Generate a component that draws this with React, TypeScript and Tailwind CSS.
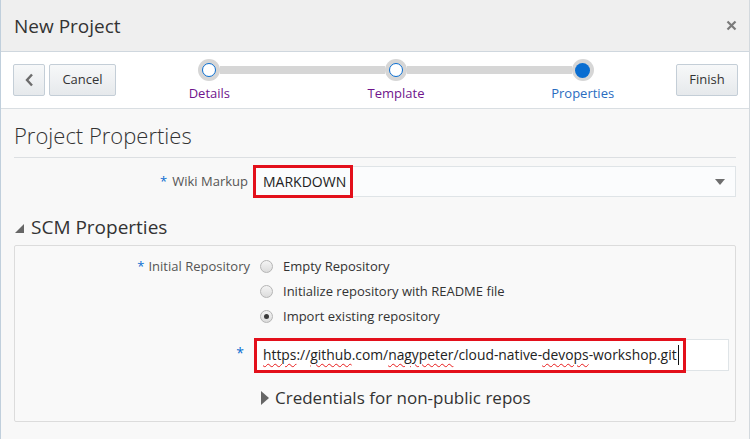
import React from 'react';

const steps = [
  { label: 'Details', done: true },
  { label: 'Template', done: true },
  { label: 'Properties', done: false },
];

const radios = [
  { label: 'Empty Repository', checked: false },
  { label: 'Initialize repository with README file', checked: false },
  { label: 'Import existing repository', checked: true },
];

const Radio = ({ checked }: { checked: boolean }) => (
  <span className="flex h-[13px] w-[13px] items-center justify-center rounded-full border border-[#b5b5b5] bg-gradient-to-b from-[#f4f4f4] to-[#dcdcdc]">
    {checked && <span className="h-[5px] w-[5px] rounded-full bg-[#3a3a3a]" />}
  </span>
);

const Step = ({ label, done, index }: { label: string; done: boolean; index: number }) => (
  <div className="flex flex-1 flex-col items-center">
    <div className="flex w-full items-center">
      <div className={`h-[8px] flex-1 ${index === 0 ? '' : 'bg-[#d6d6d6]'}`} />
      <div className="flex h-[22px] w-[22px] items-center justify-center rounded-full bg-[#d6d6d6]">
        {done ? (
          <div className="h-[14px] w-[14px] rounded-full border-[1.5px] border-[#0a6ed1] bg-white" />
        ) : (
          <div className="h-[15px] w-[15px] rounded-full bg-[#0a6ed1]" />
        )}
      </div>
      <div className={`h-[8px] flex-1 ${index === 2 ? '' : 'bg-[#d6d6d6]'}`} />
    </div>
    <span className={`mt-[3px] text-[13px] leading-[18px] ${done ? 'text-[#70148c]' : 'text-[#2a6cbf]'}`}>{label}</span>
  </div>
);

const ToolButton = ({ children, className = '' }: { children: React.ReactNode; className?: string }) => (
  <button className={`flex h-[32px] items-center justify-center rounded-[2px] border border-[#c4ced7] bg-gradient-to-b from-[#f7f8f9] to-[#e6e9ec] text-[13px] text-[#333] ${className}`}>
    {children}
  </button>
);

// spellcheck squiggle under the words the browser flags
const Wavy = ({ children }: { children: React.ReactNode }) => (
  <span className="underline decoration-wavy decoration-[#e81b1b] decoration-[1px] underline-offset-[3px]">{children}</span>
);

export default function App() {
  return (
    <div
      className="h-[439px] w-[750px] overflow-hidden border-l border-r border-l-[#c0cfdc] border-r-[#d3d9de] bg-[#f8f8f8] text-[#333]"
      style={{ fontFamily: '"Open Sans", "Noto Sans", sans-serif' }}
    >
      {/* Header */}
      <div className="flex h-[52px] items-center justify-between border-b border-[#cfd7de] bg-[#efefef] pl-[13px] pr-[12px]">
        <h1 className="text-[19px] leading-[26px] text-[#333]">New Project</h1>
        <svg width="11" height="11" viewBox="0 0 11 11">
          <path d="M1.5 1.5 L9.5 9.5 M9.5 1.5 L1.5 9.5" stroke="#7a7a7a" strokeWidth="2.2" />
        </svg>
      </div>

      {/* Train toolbar */}
      <div className="flex h-[57px] border-b border-[#d9dee2] bg-white pl-[12px] pr-[11px]">
        <div className="flex items-center gap-[4px]">
          <ToolButton className="w-[32px]">
            <svg width="9" height="14" viewBox="0 0 9 14">
              <path d="M7 1.5 L2 7 L7 12.5" stroke="#6c6c6c" strokeWidth="2.4" fill="none" />
            </svg>
          </ToolButton>
          <ToolButton className="w-[67px]">Cancel</ToolButton>
        </div>
        <div className="flex flex-1 pt-[7px]">
          {steps.map((s, i) => (
            <Step key={s.label} label={s.label} done={s.done} index={i} />
          ))}
        </div>
        <div className="flex items-center">
          <ToolButton className="w-[62px]">Finish</ToolButton>
        </div>
      </div>

      {/* Body */}
      <div className="pl-[13px] pr-[13px]">
        <div className="border-b border-[#dcdfe2] pb-[10px] pt-[14px]">
          <h2 className="text-[22px] font-light leading-[24px] text-[#333]">Project Properties</h2>
        </div>

        <div className="mt-[8px] flex h-[31px] items-center">
          <label className="w-[239px] pr-[5px] text-right text-[13px] text-[#555]">
            <span className="mr-[5px] text-[#0a6ed1]">*</span>Wiki Markup
          </label>
          <div className="relative flex h-[31px] flex-1 items-center justify-between border border-[#dfe4e7] bg-[#fbfcfd] pl-[9px] pr-[10px]">
            <span className="text-[14px] text-[#222]">MARKDOWN</span>
            <svg width="10" height="6" viewBox="0 0 10 6">
              <path d="M0 0 L10 0 L5 6 Z" fill="#6e6e6e" />
            </svg>
            <div className="absolute -left-px -top-[2px] h-[33px] w-[100px] border-[3px] border-[#e3101b]" />
          </div>
        </div>

        <div className="mt-[18px] flex h-[24px] items-center">
          <svg width="9" height="9" viewBox="0 0 9 9" className="ml-[1px] mt-[3px]">
            <path d="M9 0 L9 9 L0 9 Z" fill="#666" />
          </svg>
          <h3 className="ml-[7px] text-[19px] leading-[24px] text-[#333]">SCM Properties</h3>
        </div>

        <div className="mt-[6px] h-[177px] rounded-[2px] border border-[#dcdcdc] bg-[#f9f9f9] pt-[8px]">
          <div className="flex">
            <label className="w-[238px] pr-[3px] text-right text-[13px] leading-[25px] text-[#555]">
              <span className="mr-[4px] text-[#0a6ed1]">*</span>Initial Repository
            </label>
            <div className="flex flex-col">
              {radios.map(r => (
                <div key={r.label} className="flex h-[25px] items-center pl-[7px]">
                  <Radio checked={r.checked} />
                  <span className="ml-[10px] text-[13px] text-[#333]">{r.label}</span>
                </div>
              ))}
            </div>
          </div>

          <div className="mt-[10px] flex">
            <label className="w-[238px] pr-[9px] pt-[3px] text-right text-[14px] text-[#0a6ed1]">*</label>
            <div className="relative ml-[2px] mr-[6px] flex h-[32px] flex-1 items-center border border-[#dfe4e7] bg-white pl-[7px]">
              <span className="whitespace-nowrap text-[13.85px] text-[#222]">
                <Wavy>https</Wavy>://<Wavy>github</Wavy>.com/<Wavy>nagypeter</Wavy>/cloud-native-<Wavy>devops</Wavy>-workshop.git
              </span>
              <span className="ml-[1px] h-[20px] w-px bg-[#111]" />
              <div className="absolute -left-[2px] -top-[2px] h-[35px] w-[432px] border-[3px] border-[#e3101b]" />
            </div>
          </div>

          <div className="mt-[15px] flex h-[24px] items-center pl-[246px]">
            <svg width="8" height="14" viewBox="0 0 8 14">
              <path d="M0 0 L8 7 L0 14 Z" fill="#666" />
            </svg>
            <span className="ml-[6px] text-[17px] leading-[24px] text-[#333]">Credentials for non-public repos</span>
          </div>
        </div>
      </div>
    </div>
  );
}
